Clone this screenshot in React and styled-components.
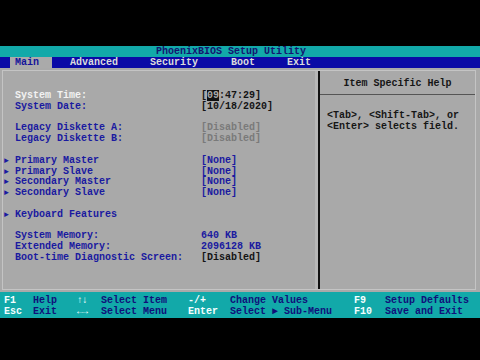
import styled, { createGlobalStyle } from "styled-components";

const GlobalStyle = createGlobalStyle`
  html, body {
    margin: 0;
    padding: 0;
    background: #000;
  }
  body {
    font-family: "Liberation Mono", "DejaVu Sans Mono", monospace;
    font-weight: 700;
    font-size: 10px;
  }
`;

const Screen = styled.div`
  width: 480px;
  height: 360px;
  background: #000;
  display: flex;
  flex-direction: column;
  overflow: hidden;
`;

const TopSpace = styled.div`
  height: 46px;
`;

const TitleBar = styled.div`
  height: 11px;
  line-height: 11px;
  background: #12a9a9;
  color: #141470;
  padding-left: 156px;
  white-space: pre;
`;

const TabBar = styled.div`
  height: 11px;
  line-height: 11px;
  background: #0a0aa6;
  display: flex;
  padding-left: 10px;
`;

const Tab = styled.div`
  margin-left: ${(p) => p.$gap || 0}px;
  padding: ${(p) => (p.$active ? "0 13px 0 5px" : "0")};
  background: ${(p) => (p.$active ? "#aaaaaa" : "transparent")};
  color: ${(p) => (p.$active ? "#14149a" : "#dcdcdc")};
`;

const Body = styled.div`
  height: 224px;
  background: #a9a9a9;
  padding: 2px 4px 2px 2px;
  box-sizing: border-box;
  display: flex;
`;

const Frame = styled.div`
  flex: 1;
  border: 1px solid #c4c4c4;
  display: flex;
`;

const LeftPane = styled.div`
  width: 314px;
  border-right: 2px solid #121212;
  box-shadow: inset -3px 0 0 #b8b8b8;
  padding: 20px 0 0 1px;
`;

const RightPane = styled.div`
  flex: 1;
  display: flex;
  flex-direction: column;
`;

const HelpTitle = styled.div`
  height: 24px;
  padding-top: 2px;
  box-sizing: border-box;
  line-height: 22px;
  text-align: center;
  color: #161616;
  border-bottom: 1px solid #555;
`;

const HelpText = styled.div`
  padding: 16px 0 0 7px;
  line-height: 10.8px;
  color: #161616;
  white-space: pre;
`;

const Row = styled.div`
  display: grid;
  grid-template-columns: 11px 186px 1fr;
  height: 10.8px;
  line-height: 10.8px;
  white-space: pre;
`;

const Arrow = styled.span`
  color: #1a1aa0;
  font-size: 8px;
`;

const Label = styled.span`
  color: ${(p) => p.$color || "#1a1aa0"};
`;

const Value = styled.span`
  color: ${(p) => p.$color || "#1a1aa0"};
`;

const Cursor = styled.span`
  background: #111;
  color: #a9a9a9;
`;

const Footer = styled.div`
  height: 26px;
  background: #12a9a9;
  padding: 3px 0 0 4px;
  box-sizing: border-box;
  display: grid;
  grid-template-columns: 29px 44px 24px 87px 42px 124px 31px 1fr;
  grid-auto-rows: 11px;
  line-height: 11px;
  white-space: pre;
`;

const Key = styled.span`
  color: #f4ffff;
  letter-spacing: ${(p) => (p.$tight ? "-1px" : "0")};
`;

const Desc = styled.span`
  color: #10107a;
`;

const BLUE = "#1a1aa0";
const GRAY = "#7a7a7a";
const BLACK = "#141414";

const rows = [
  { label: "System Time:", labelColor: "#f2f2f2", time: true },
  { label: "System Date:", value: "[10/18/2020]", valueColor: BLACK },
  {},
  { label: "Legacy Diskette A:", value: "[Disabled]", valueColor: GRAY },
  { label: "Legacy Diskette B:", value: "[Disabled]", valueColor: GRAY },
  {},
  { arrow: true, label: "Primary Master", value: "[None]" },
  { arrow: true, label: "Primary Slave", value: "[None]" },
  { arrow: true, label: "Secondary Master", value: "[None]" },
  { arrow: true, label: "Secondary Slave", value: "[None]" },
  {},
  { arrow: true, label: "Keyboard Features" },
  {},
  { label: "System Memory:", value: "640 KB" },
  { label: "Extended Memory:", value: "2096128 KB" },
  { label: "Boot-time Diagnostic Screen:", value: "[Disabled]", valueColor: BLACK },
];

const footerRows = [
  ["F1", "Help", "↑↓", "Select Item", "-/+", "Change Values", "F9", "Setup Defaults"],
  ["Esc", "Exit", "←→", "Select Menu", "Enter", "Select ► Sub-Menu", "F10", "Save and Exit"],
];

const App = () => {
  return (
    <>
      <GlobalStyle />
      <Screen>
        <TopSpace />
        <TitleBar>PhoenixBIOS Setup Utility</TitleBar>
        <TabBar>
          <Tab $active>Main</Tab>
          <Tab $gap={18}>Advanced</Tab>
          <Tab $gap={32}>Security</Tab>
          <Tab $gap={33}>Boot</Tab>
          <Tab $gap={32}>Exit</Tab>
        </TabBar>
        <Body>
          <Frame>
            <LeftPane>
              {rows.map((r, i) => (
                <Row key={i}>
                  <Arrow>{r.arrow ? "►" : ""}</Arrow>
                  <Label $color={r.labelColor || BLUE}>{r.label || ""}</Label>
                  {r.time ? (
                    <Value $color={BLACK}>
                      [<Cursor>09</Cursor>:47:29]
                    </Value>
                  ) : (
                    <Value $color={r.valueColor || BLUE}>{r.value || ""}</Value>
                  )}
                </Row>
              ))}
            </LeftPane>
            <RightPane>
              <HelpTitle>Item Specific Help</HelpTitle>
              <HelpText>
                {"<Tab>, <Shift-Tab>, or\n<Enter> selects field."}
              </HelpText>
            </RightPane>
          </Frame>
        </Body>
        <Footer>
          {footerRows.map((row) =>
            row.map((txt, j) =>
              j % 2 === 0 ? (
                <Key key={row[0] + j} $tight={j === 2}>
                  {txt}
                </Key>
              ) : (
                <Desc key={row[0] + j}>{txt}</Desc>
              )
            )
          )}
        </Footer>
      </Screen>
    </>
  );
};

export default App;
